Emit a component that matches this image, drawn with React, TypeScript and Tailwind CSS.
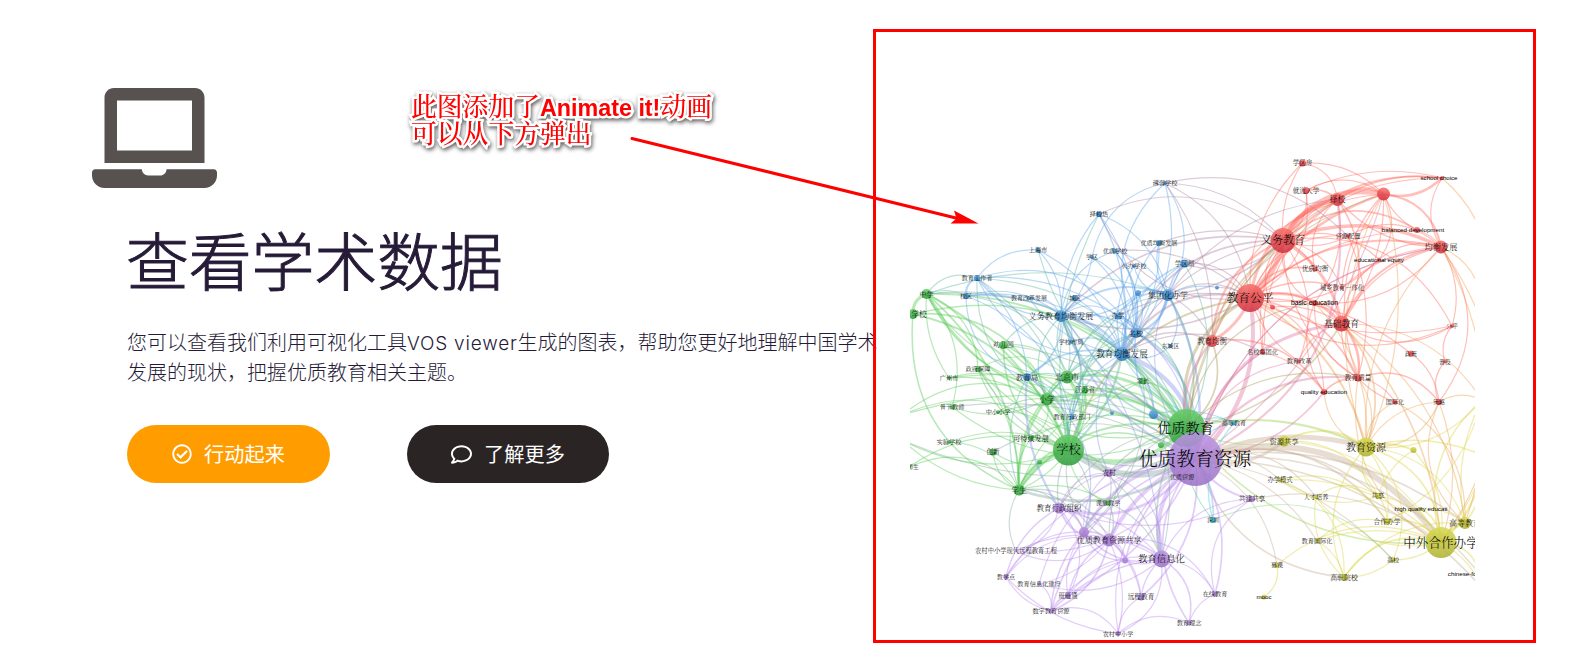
import React from "react";
import { FaLaptop, FaRegCheckCircle, FaRegComment } from "react-icons/fa";

type Group = "r" | "b" | "g" | "p" | "y" | "c";
type Node = { id: string; x: number; y: number; r: number; g: Group; label?: string; fs: number; lx: number };

const n = (id: string, x: number, y: number, r: number, g: Group, label = "", fs = 6.2, lx = x): Node => ({ id, x, y, r, g, label, fs, lx });

const nodes: Node[] = [
  n("yz", 1186.5, 428, 19, "g", "优质教育", 14.2, 1185.5),
  n("main", 1195.5, 459, 27, "p", "优质教育资源", 18.8, 1195),
  n("zyx", 1182, 477, 0, "p", "优质资源", 6.2),
  n("yw", 1283, 240.5, 12.5, "r", "义务教育", 11),
  n("gp", 1250, 298, 14, "r", "教育公平", 11.8),
  n("xx", 1068.5, 450, 15.5, "g", "学校", 12.2),
  n("zw", 1441, 542.5, 15.5, "y", "中外合作办学", 12.6),
  n("jy", 1366, 447, 9.5, "y", "教育资源", 10),
  n("xi", 1161.5, 559, 8.5, "p", "教育信息化", 9.4),
  n("jc", 1341.5, 323.5, 8, "r", "基础教育", 8.8),
  n("jf", 1441, 247, 6.5, "r", "均衡发展", 8.2),
  n("zx", 1337.5, 199.5, 6.5, "r", "择校", 8),
  n("rd", 1383.5, 194, 6.5, "r"),
  n("jj", 1122, 354, 7, "b", "教育均衡发展", 8.6),
  n("ywj", 1061, 316, 6, "b", "义务教育均衡发展", 8.1),
  n("jt", 1168, 295, 6, "b", "集团化办学", 8),
  n("mx", 1136, 333, 5, "b", "名校", 7.2),
  n("bj", 1067, 377, 6.5, "g", "北京市", 8),
  n("xiao", 1047, 399, 6.5, "g", "小学", 8),
  n("xs", 1019, 490, 5.5, "g", "学生", 7.6),
  n("jyj", 1212, 341, 6, "r", "教育均衡", 7.5),
  n("zf", 1284, 441, 5.5, "y", "资源共享", 7.3),
  n("gx", 1109, 540, 6.5, "p", "优质教育资源共享", 8.1),
  n("zz", 1059, 508, 5.5, "p", "教育行政组织", 7.5),
  n("pd", 1084, 532, 5, "p"),
  n("gd", 1465, 523, 6, "y", "高等教育", 8),
  n("shs", 1038, 250, 2.5, "b", "上海市"),
  n("xq", 1092, 257, 2, "b", "学区", 6),
  n("jg", 977, 278, 3, "b", "教育工作者"),
  n("zhx", 926.5, 294, 5, "g", "中学", 7.2),
  n("xx2", 913, 314, 5, "g", "学校", 7.6, 919),
  n("xqu", 966, 296, 3, "b", "校区", 6),
  n("gg", 1029, 298, 2, "b", "教育改革发展", 6),
  n("qy", 1075, 298, 3, "b", "城区", 6),
  n("zxr", 1099, 214, 3, "b", "择校热"),
  n("br", 1165, 183, 2, "b", "薄弱学校"),
  n("yzj", 1159, 243, 3, "b", "优质均衡发展"),
  n("yxx", 1115, 251, 2.5, "b", "优质学校"),
  n("gb", 1134, 266, 2, "b", "公办学校"),
  n("xqz", 1184.5, 263.5, 4, "b", "学区制", 6.5),
  n("b1", 1138, 293, 3, "b"),
  n("b2", 1217, 287.5, 2, "b"),
  n("b3", 1112, 413, 2, "b"),
  n("b4", 1153.5, 414.5, 4.5, "b"),
  n("r1", 1272.5, 307, 2.5, "r"),
  n("bx", 1118, 316, 3.5, "b", "办学", 6.4),
  n("xqf", 1302.5, 163, 3.5, "r", "学区房", 6.5),
  n("jr", 1306, 190.5, 3.5, "r", "就近入学", 6.7),
  n("sc", 1442, 178, 2, "r", "school choice", 6.1, 1439),
  n("bd", 1417, 230, 3, "r", "balanced development", 6.2, 1413),
  n("zp", 1348, 236, 2, "r", "资源配置"),
  n("ee", 1379, 259.5, 2, "r", "educational equity", 6.2),
  n("yj", 1315, 269, 2.5, "r", "优质均衡", 6.7),
  n("cx", 1342, 288, 1.5, "r", "城乡教育一体化", 6.3),
  n("be", 1314.5, 303, 3, "r", "basic education", 6.8),
  n("yey", 1003.5, 345, 4, "g", "幼儿园", 6.8),
  n("xb", 1071, 342, 2, "b", "学校布局"),
  n("zfb", 978, 369, 3, "g", "政府保障"),
  n("gz", 949, 378, 2, "g", "广州市"),
  n("jyju", 1027, 377, 4, "b", "教育局", 7.4),
  n("js", 1085, 390, 3.5, "g", "江苏省", 6.7),
  n("gj", 952, 407, 2.5, "g", "骨干教师"),
  n("zxx", 998, 412, 2, "g", "中小小学"),
  n("xz", 1072, 417, 2.5, "b", "教育行政部门"),
  n("kc", 1031, 438, 2.5, "g", "可持续发展", 7.1),
  n("sy", 949, 442, 2, "g", "实验学校"),
  n("cxn", 993, 452, 3.5, "g", "创新", 6.6),
  n("g1", 1039.5, 462, 2.5, "g"),
  n("g2", 1161, 445, 3, "g"),
  n("ss", 909, 467, 2, "g", "师生", 5.8, 913),
  n("dc", 1170.5, 346, 2, "b", "东城区", 5.8),
  n("mxj", 1262.5, 352, 2.5, "r", "名校集团化"),
  n("jz", 1143, 381, 3.5, "g", "家长", 6.2),
  n("ch", 1234, 423, 2.5, "c", "高等教育", 6.1),
  n("nc", 1109, 473, 4, "p", "农村", 6.8),
  n("jgg", 1299, 361, 2, "r", "教育改革"),
  n("zl", 1358, 378, 3.5, "r", "教育质量", 6.8),
  n("qe", 1324, 392, 3, "r", "quality education", 6.2),
  n("pg", 1452, 326, 2, "r", "公平", 6),
  n("zc", 1411, 353.5, 3, "r", "政策", 6),
  n("pj", 1445, 361.5, 2, "r", "普及", 6),
  n("gjh", 1395, 402, 2.5, "r", "国际化", 6.1),
  n("cl", 1439, 402, 3, "r", "策略", 6),
  n("y1", 1413.5, 450, 3, "y"),
  n("kt", 1108, 503, 2.5, "g", "课堂教学"),
  n("nz", 1016, 551, 1, "p", "农村中小学现代远程教育工程", 6.3),
  n("p1", 1125, 560.5, 3, "p"),
  n("jxd", 1006, 577, 2.5, "p", "教学点", 6.1),
  n("xj", 1039, 584, 1.5, "p", "教育信息化建设"),
  n("bb", 1068, 596, 3, "p", "班班通", 6.3),
  n("yc", 1141, 597, 3.5, "p", "远程教育", 6.7),
  n("sz", 1051, 611, 2.5, "p", "数字教育资源"),
  n("nx", 1118, 633.5, 2.5, "p", "农村中小学", 6.1),
  n("ln", 1189, 623, 2.5, "p", "教育理念", 6.2),
  n("bm", 1280, 480, 2.5, "y", "办学模式", 6.3),
  n("gjg", 1252, 499, 3, "p", "共建共享", 6.6),
  n("rc", 1316, 497, 2, "y", "人才培养", 6.2),
  n("gxi", 1378, 496, 3, "y", "共享", 6.4),
  n("hq", 1421, 508.5, 1.5, "y", "high quality educati", 6.2),
  n("hz", 1387, 521.5, 3.5, "y", "合作办学", 6.8),
  n("szn", 1213, 520, 3, "c", "深圳", 5.8),
  n("jgj", 1317, 541, 2, "y", "教育国际化", 6.2),
  n("gxo", 1393, 560, 2.5, "y", "高校", 6.1),
  n("mk", 1277, 565, 2.5, "y", "慕课", 6),
  n("gzy", 1344, 577.5, 3.5, "y", "高职院校", 6.9),
  n("mo", 1264, 597, 2.5, "y", "mooc", 6.2),
  n("zx2", 1215, 594, 2.5, "p", "在线教育", 6.2),
  n("cf", 1480, 574, 1, "y", "chinese-foreign", 6.2, 1469),
  n("o1", 1482, 400, 0, "y"),
  n("o2", 1482, 310, 0, "y"),
  n("o3", 1482, 455, 0, "y"),
  n("o4", 1482, 588, 0, "y"),
  n("o5", 902, 415, 0, "g"),
  n("o6", 902, 440, 0, "g"),
];

const byId = Object.fromEntries(nodes.map((d) => [d.id, d]));

// hub | links; a trailing number sets the stroke width
const links = `
yw|gp:5 zx:4 rd:5 jf:3.5 jr xqf sc:1.5 bd:1.5 zp ee:1.2 yj cx be jc:3 jyj:2 mxj zl r1 br zxr jt:1.5 ywj:1.4 jj:1.8 mx xqz yzj jgg pg
gp|zx:3 rd:2.4 jf:1.8 jr xqf sc bd ee yj:1.5 be jc:3 jyj:3 mxj zp cx:1.2 pg zc zl:1.5 jj:2 ywj:1.5 jt bx br zxr yxx xqz b2 main:4 yz:3 jy:2 xx:1.6 jgg r1 qe
jc|zl:1.5 zx:1.4 rd jf:2 be:2 ee pg r1 jgg main:3 yz:1.4 jy:1.6 zw:1.5 o1 gjh gd
jf|rd:2 zx sc bd ee cl pg o2 cx be zp jc main
rd|sc:2.4 zx:2.2 xqf jr bd zl jyj jy ee cx
zx|sc:1.5 jr:1.6 xqf be yj jyj mxj main:2 jt
sc|o2 jr
main|yz:7 xx:6 xiao:2 bj:2 jj:4 ywj:2 mx:2 jt:2.2 bx xqz b4:2 jyj:2.4 jy:5 zf:3 zw:6 gd:1.5 jf rd gxi:1.3 hz:1.7 jgj gzy:1.4 gxo bm rc gjg:2 xi:4 gx:4 pd:3 zz:2.5 nc:4 kt:1.4 p1:1.5 yc:1.7 ln:1.5 zx2:1.5 nx bb:1.4 sz:1.5 xj jxd nz szn:1.6 mk ch:1.2 qe:1.5 zl:2 gj zxx zfb yey js:1.6 jz xs:2.6 zhx o4:1.5 cxn o6 cf:1.2 jgg mxj
yz|xx:4 xiao:3 bj:3 jj:3 ywj:1.8 mx:1.6 jt:1.5 xs:1.6 yey:1.5 zhx:1.6 xx2:1.4 kc zfb gz js:1.6 jz:1.6 b4 g2 nc:1.4 zz jyj:1.6 zx rd jy:2 zw:1.4 gx xi:1.6 ch zf zl be yw:1.6 gj o5 xqz bx shs jg
xx|xiao:4 bj:3 xs:4 yey:1.5 zhx:2 xx2:2 jyju:1.3 js:1.5 zxx kc g1:2 cxn sy xz jz zfb:1.2 gz b3 g2:1.3 jj:2 ywj:1.5 mx:1.4 nc:1.6 kt zz:1.2 ss o5 o6 jt bx jg gx xi pd zxr
xs|xiao:2 bj:1.5 xx2:1.4 zhx:1.6 zz g1:2 cxn ss kt sy o6 nz gx kc js zfb jz pd
xiao|bj:2 zhx:2 yey:1.4 xx2:1.5 jyju js:1.4 zxx jj ywj gj o5 mx gz kc
bj|js:1.2 yey jyju jj mx bx jt ywj zhx zfb jz xqu
zhx|xx2:3 xqu zfb gz gj jg jj js jt
jj|ywj:2.6 mx:2.4 jt:2 bx:1.5 qy:1.2 xqu jg shs xq zxr:1.2 br yxx gb:1.2 xqz:1.4 yzj jyju:1.4 xb xz dc b1 b4:1.8 b3 gg jyj:1.3 jz mxj
ywj|qy:1.3 jg:1.3 bx mx:1.6 jt:1.6 xq xqu gg shs jyju:1.5 zxr xz xb b1 yxx xi yey js
jt|mx:2 xqz:1.5 b1:1.4 bx:1.6 yzj br b2 zxr gb yxx dc jyj
mx|xqz bx:1.4 zxr b1 br yxx xq b4:1.4 yzj jg
jg|xqu:2 jyju xiao bx shs
xqu|xz jyju jj
jyju|zz:2 xz pd xs
jy|zf:1.8 y1:2 zl gxi jf gjh o3:1.4 o1 zw:1.5 hz gd rd cl gxo be qe
zw|gd:3 hz:2 gxo:1.4 hq:1.3 gzy:1.6 gjg rc jgj gxi cf:1.5 o3:2 o1:1.3 o4:1.2 zf zl y1 mk cl o2 jf bm
gd|hz o3:1.5 gjh o1 gzy cl jf
gzy|rc bm jgj jy gxo
hz|gxi jgj bm o1
gxi|zf y1 bm rc
xi|gx:1.8 pd:1.5 yc:1.2 zx2 ln:1.4 p1 bb sz:1.4 nz nx kt gjg jz xj nc zz
gx|zz:2 pd:1.8 nc nx sz:1.5 p1 bb:1.3 jxd xj kt:1.2 zx2 yc nz yc
zz|pd:1.7 nc jxd:1.3 nz kt p1 bb gjg
pd|sz:1.4 nc p1 bb jxd kt jz
nx|ln jxd yc sz
sz|jxd xj p1 bb
zx2|gjg ln
szn|ch:1.2 gxo yz
ch|b4 jj
mk|mo:1.2
qe|zl:1.6 jyj:1.4 mxj be
zl|cl:1.3 gjh be zp jc
cl|o1 jy zc pj
pg|gp pj
br|xq jyj zp
nc|zz jj kt
`;

const rgb: Record<Group, number[]> = {
  r: [255, 105, 92],
  b: [92, 162, 232],
  g: [88, 202, 88],
  p: [186, 138, 238],
  y: [216, 212, 64],
  c: [70, 208, 222],
};

const edges = links
  .trim()
  .split("\n")
  .flatMap((line, li) => {
    const [hub, rest] = line.split("|");
    return rest.split(" ").map((t, i) => {
      const [to, w] = t.split(":");
      const a = byId[hub];
      const b = byId[to];
      const dx = b.x - a.x;
      const dy = b.y - a.y;
      const side = (li + i) % 4 === 0 ? -1 : 1;
      const k = side * (0.18 + ((i * 7 + li * 3) % 5) * 0.045) * (dx > 0 ? 1 : -1);
      const cx = (a.x + b.x) / 2 + dy * k;
      const cy = (a.y + b.y) / 2 - Math.abs(dx) * Math.abs(k) * (dx * k >= 0 ? 1 : -1);
      const ca = rgb[a.g];
      const cb = rgb[b.g];
      const stroke = `rgb(${ca.map((v, j) => Math.round((v + cb[j]) / 2)).join(",")})`;
      return { d: `M${a.x} ${a.y}Q${cx.toFixed(1)} ${cy.toFixed(1)} ${b.x} ${b.y}`, w: Number(w ?? 1) * 0.95 + 0.25, stroke };
    });
  });

const grads: [Group, string, string][] = [
  ["r", "#f9706a", "#cf2c3b"],
  ["b", "#62abe2", "#2c76b8"],
  ["g", "#66cc66", "#2a9a37"],
  ["p", "#bc94e4", "#9a70c4"],
  ["y", "#d8da54", "#adaf2c"],
  ["c", "#55cbdc", "#239eb2"],
];

function NetworkMap() {
  return (
    <svg className="block h-[490px] w-[565px]" viewBox="910 150 565 490">
      <defs>
        {grads.map(([g, top, bottom]) => (
          <linearGradient key={g} id={`fill-${g}`} x1="0" y1="0" x2="0" y2="1">
            <stop offset="0" stopColor={top} />
            <stop offset="1" stopColor={bottom} />
          </linearGradient>
        ))}
      </defs>
      <g fill="none" strokeOpacity="0.42">
        {edges.map((e, i) => (
          <path key={i} d={e.d} stroke={e.stroke} strokeWidth={e.w} />
        ))}
      </g>
      {nodes.map((d) => (
        <circle key={d.id} cx={d.x} cy={d.y} r={d.r} fill={`url(#fill-${d.g})`} fillOpacity="0.86" />
      ))}
      <g
        textAnchor="middle"
        fill="#000"
        className="font-['Liberation_Sans','Noto_Serif_CJK_SC','Noto_Sans_CJK_SC',sans-serif] font-light"
      >
        {nodes.map((d) =>
          d.label ? (
            <text key={d.id} x={d.lx} y={d.y + d.fs * 0.36} fontSize={d.fs}>
              {d.label}
            </text>
          ) : null,
        )}
      </g>
    </svg>
  );
}

function PillButton({ className, icon, children }: { className: string; icon: React.ReactNode; children: React.ReactNode }) {
  return (
    <button className={`flex h-[58px] items-center justify-center gap-3 rounded-full text-[20.2px] leading-none text-white ${className}`}>
      {icon}
      <span>{children}</span>
    </button>
  );
}

function Annotation() {
  return (
    <>
      <p className="absolute left-[411px] top-[94px] whitespace-nowrap font-['Liberation_Sans','Noto_Serif_CJK_SC','Noto_Sans_CJK_SC',sans-serif] text-[25.8px] font-medium leading-[26.5px] text-[#ff0000] [paint-order:stroke_fill] [-webkit-text-stroke:5px_white] [filter:drop-shadow(1px_2px_2px_rgba(0,0,0,0.65))]">
        此图添加了<span className="text-[23.3px] font-bold leading-none">Animate it!</span>动画
        <br />
        可以从下方弹出
      </p>
      <svg className="absolute left-[620px] top-[130px] h-[100px] w-[365px]" viewBox="620 130 365 100">
        <path d="M632 138.5L960 219" stroke="#ff0000" strokeWidth="3" strokeLinecap="round" />
        <path d="M978.5 223.5L954 210.5L956.5 218.5L950.5 223.5Z" fill="#ff0000" />
      </svg>
    </>
  );
}

export default function App() {
  return (
    <main className="relative flex h-[659px] w-[1578px] overflow-hidden bg-white font-['Noto_Sans_CJK_SC',sans-serif]">
      <section className="w-[873px] shrink-0 pl-[127px] pt-[88px] text-[#261b37]">
        <FaLaptop className="-ml-[35px] h-[100px] w-[125px] text-[#575250]" />
        <h1 className="-ml-px mt-[26px] whitespace-nowrap text-[62.8px] font-light leading-[88px] [-webkit-text-stroke:1px_#261b37]">
          查看学术数据
        </h1>
        <p className="mt-[25px] w-[752px] text-[20px] font-light leading-[30px]">
          <span className="whitespace-nowrap">
            您可以查看我们利用可视化工具
            <span className="font-['Inter',sans-serif] text-[19px] leading-none tracking-[0.8px]">VOS viewer</span>
            生成的图表，帮助您更好地理解中国学术
          </span>
          <br />
          发展的现状，把握优质教育相关主题。
        </p>
        <div className="mt-[38px] flex gap-[77px]">
          <PillButton className="w-[203px] bg-[#ff9d00]" icon={<FaRegCheckCircle className="size-5" />}>
            行动起来
          </PillButton>
          <PillButton className="w-[202px] bg-[#2a2524]" icon={<FaRegComment className="size-[21px]" />}>
            了解更多
          </PillButton>
        </div>
      </section>
      <section className="relative mt-[29px] h-[614px] w-[663px] shrink-0 border-[3px] border-[#ff0000] pl-[34px] pt-[118px]">
        <NetworkMap />
      </section>
      <Annotation />
    </main>
  );
}
